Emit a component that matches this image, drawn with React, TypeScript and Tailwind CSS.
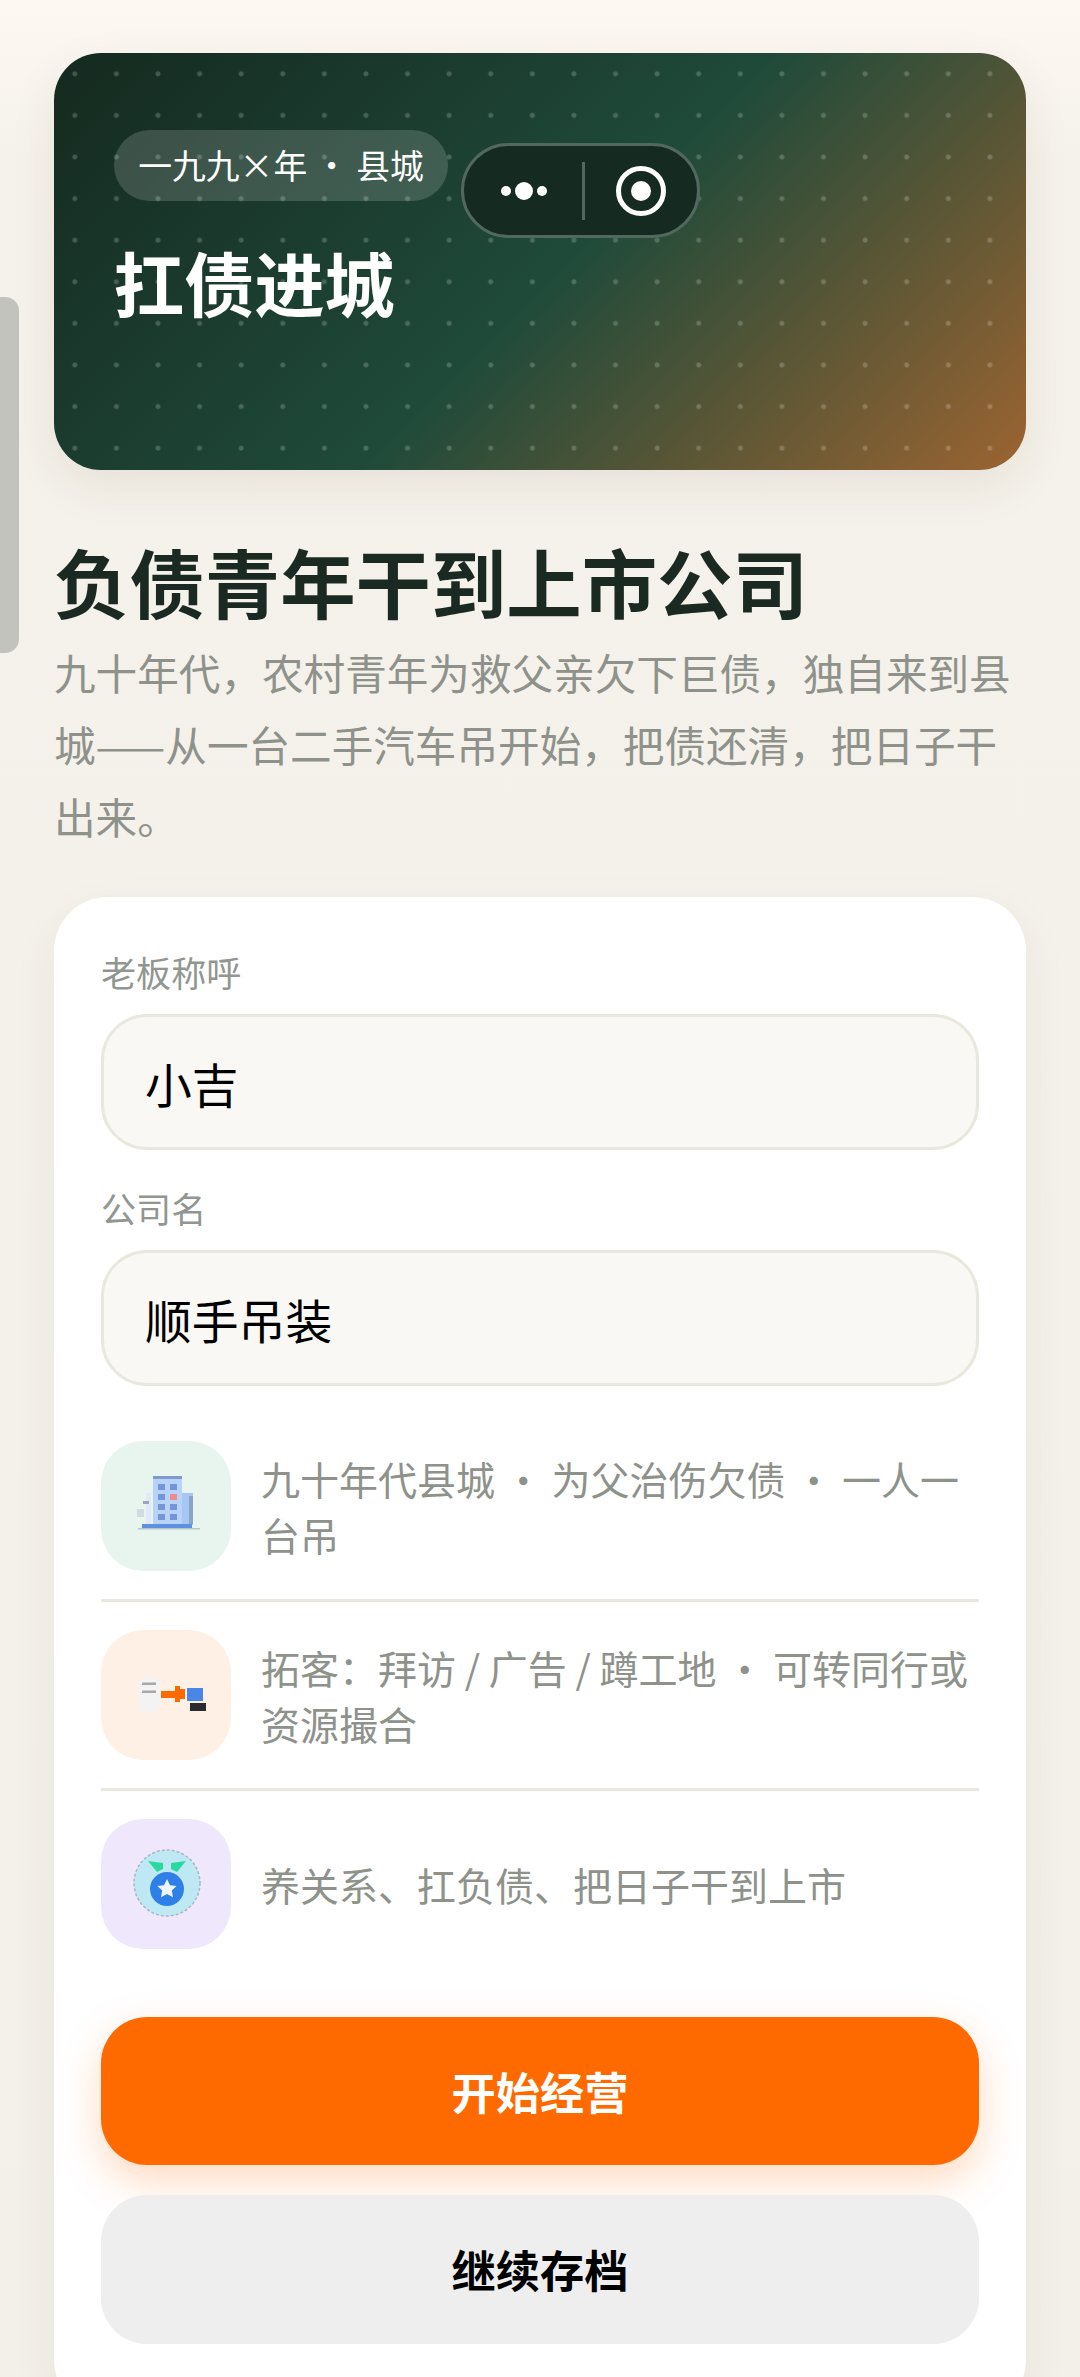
const fieldClass =
  "h-[136px] w-full rounded-[46px] border-[3px] border-[#e9e7de] bg-[#f9f8f4] pl-[41px] text-[46.8px] text-black outline-none";

const BuildingIcon = () => (
  <svg viewBox="0 0 130 130" className="h-[130px] w-[130px]">
    <rect x="77" y="52" width="15" height="32" fill="#a6c6f3" />
    <rect x="88" y="55" width="4" height="28" fill="#8aa4c8" />
    <rect x="52" y="35" width="29" height="49" rx="2" fill="#b9d2f7" />
    <rect x="52" y="35" width="29" height="3" fill="#7d9bd0" />
    {[43, 53, 63, 73].map((y) =>
      [57, 69].map((x) => (
        <rect key={`${x}-${y}`} x={x} y={y} width="7" height="6" fill={x === 69 && y === 53 ? "#ef8b8b" : "#7396d8"} />
      ))
    )}
    <rect x="45" y="52" width="5" height="31" fill="#dfe9f7" />
    <rect x="42" y="60" width="6" height="3" fill="#9aa7b8" />
    <rect x="36" y="68" width="7" height="8" fill="#d2dbe2" />
    <rect x="41" y="83" width="50" height="4" fill="#5f90e0" />
    <rect x="37" y="87" width="62" height="1.5" fill="#b7c6cc" />
  </svg>
);

const HandoffIcon = () => (
  <svg viewBox="0 0 130 130" className="h-[130px] w-[130px]">
    <rect x="37" y="47" width="22" height="36" rx="9" fill="#f3f3f3" />
    <rect x="41" y="52.5" width="14" height="2.5" fill="#a8a8a8" />
    <rect x="41" y="60.5" width="14" height="2.5" fill="#a8a8a8" />
    <path d="M60 61h14v-5h5v3h5v10h-5v3h-5v-4H60z" fill="#ff6a00" />
    <rect x="86" y="58" width="16" height="13" fill="#4a86e8" />
    <rect x="89" y="73" width="16" height="8" fill="#2a2c30" />
  </svg>
);

const MedalIcon = () => (
  <svg viewBox="0 0 130 130" className="h-[130px] w-[130px]">
    <circle cx="66" cy="64" r="33" fill="#bfe8f5" stroke="#a5b9c4" strokeWidth="1.5" strokeDasharray="3 2" />
    <path d="M47 42l15 2v6l-6 3z" fill="#2bd9a0" />
    <path d="M85 42l-15 2v6l6 3z" fill="#2bd9a0" />
    <circle cx="66" cy="70" r="17" fill="#2f7fe8" />
    <path d="M66 60l3 6.2 6.6.8-4.8 4.6 1.2 6.6-6-3.2-6 3.2 1.2-6.6-4.8-4.6 6.6-.8z" fill="#eef7fc" />
  </svg>
);

const features = [
  { tile: "bg-[#e8f4ee]", icon: <BuildingIcon />, text: "九十年代县城 · 为父治伤欠债 · 一人一台吊" },
  { tile: "bg-[#fff0e6]", icon: <HandoffIcon />, text: "拓客：拜访 / 广告 / 蹲工地 · 可转同行或资源撮合" },
  { tile: "bg-[#efe8fc]", icon: <MedalIcon />, text: "养关系、扛负债、把日子干到上市" },
];

export default function App() {
  return (
    <div className="relative h-[2377px] w-[1080px] overflow-hidden bg-[linear-gradient(180deg,#fdf9f2_0px,#f5f2eb_160px,#f3f0e9_100%)] px-[54px] pt-[53px] font-['Noto_Sans_CJK_SC','Noto_Sans',sans-serif]">
      {/* side handle */}
      <div className="absolute left-0 top-[297px] h-[356px] w-[19px] rounded-r-[14px] bg-[#c2c3bc]" />

      {/* hero */}
      <section className="relative h-[417px] overflow-hidden rounded-[47px] bg-[linear-gradient(135deg,#15291f_0%,#1f4a3a_52%,#9c6431_100%)] pl-[60px] pt-[77px] shadow-[0_16px_48px_rgba(60,50,30,0.08)]">
        <div className="absolute inset-0 bg-[radial-gradient(circle,rgba(255,255,255,0.2)_2px,transparent_3px)] bg-[length:41.6px_41.6px]" />
        <div className="relative flex h-[71px] w-[334px] items-center justify-center rounded-full bg-white/16 text-[33.8px] text-white">
          一九九×年 · 县城
        </div>
        <h1 className="relative mt-[36px] text-[70.2px] font-bold leading-[90px] text-white">扛债进城</h1>
      </section>

      {/* wechat capsule */}
      <div className="absolute left-[461px] top-[143px] flex h-[95px] w-[239px] items-center rounded-full border-[3px] border-[#51685f] bg-[#152a21]">
        <div className="flex w-[118px] items-center justify-center gap-[4px] pl-[2px]">
          <span className="h-[10px] w-[10px] rounded-full bg-white" />
          <span className="h-[18px] w-[18px] rounded-full bg-white" />
          <span className="h-[10px] w-[10px] rounded-full bg-white" />
        </div>
        <div className="h-[58px] w-[3px] bg-[#51685f]" />
        <div className="flex flex-1 items-center justify-center">
          <div className="flex h-[50px] w-[50px] items-center justify-center rounded-full border-[5px] border-white">
            <span className="h-[20px] w-[20px] rounded-full bg-white" />
          </div>
        </div>
      </div>

      {/* headline */}
      <h2 className="mt-[61px] text-[75.4px] font-bold leading-[100px] text-[#1a2a22]">负债青年干到上市公司</h2>
      <p className="mt-[5px] text-[41.6px] leading-[72px] text-[#8e928b]">
        九十年代，农村青年为救父亲欠下巨债，独自来到县城——从一台二手汽车吊开始，把债还清，把日子干出来。
      </p>

      {/* card */}
      <section className="mt-[45px] rounded-[54px] bg-white px-[47px] pb-[70px] pt-[50px] shadow-[0_16px_48px_rgba(60,50,30,0.06)]">
        <label className="block text-[35.1px] leading-[50px] text-[#929690]">老板称呼</label>
        <input className={`${fieldClass} mt-[17px]`} defaultValue="小吉" readOnly />
        <label className="mt-[33px] block text-[35.1px] leading-[50px] text-[#929690]">公司名</label>
        <input className={`${fieldClass} mt-[17px]`} defaultValue="顺手吊装" readOnly />

        <ul className="mt-[27px]">
          {features.map((item, i) => (
            <li
              key={i}
              className={`flex items-center gap-[30px] py-[28px] ${i < features.length - 1 ? "border-b-[3px] border-[#e9e7de]" : ""}`}
            >
              <div className={`h-[130px] w-[130px] shrink-0 rounded-[42px] ${item.tile}`}>{item.icon}</div>
              <p className="text-[39px] leading-[56px] text-[#8e928b]">{item.text}</p>
            </li>
          ))}
        </ul>

        <button className="mt-[40px] block h-[148px] w-full rounded-[46px] bg-[#ff6a00] text-[44.2px] font-bold text-white shadow-[0_16px_42px_rgba(255,106,0,0.25)]">
          开始经营
        </button>
        <button className="relative mt-[30px] block h-[149px] w-full rounded-[46px] bg-[#eeeeee] text-[44.2px] font-bold text-black">
          继续存档
        </button>
      </section>
    </div>
  );
}
